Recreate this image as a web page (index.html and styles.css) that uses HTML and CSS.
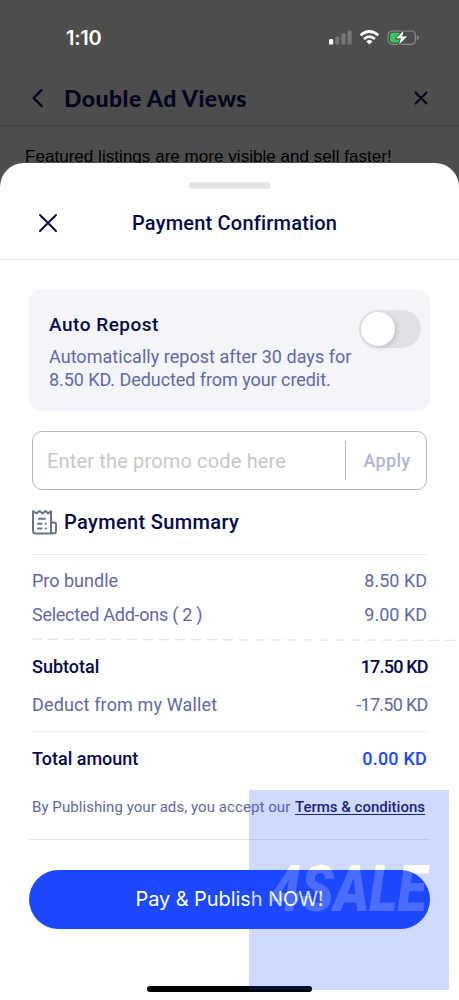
FILE: index.html
```html
<!DOCTYPE html>
<html lang="en">
<head>
<meta charset="utf-8">
<title>Payment Confirmation</title>
<link rel="stylesheet" href="styles.css">
</head>
<body>
<main class="screen">
  <div class="backdrop">
    <div class="status">
      <span class="time">1:10</span>
      <svg class="signals" width="92" height="18" viewBox="0 0 92 18">
        <rect x="0" y="9" width="4.2" height="5.6" rx="1.2" fill="#fff"/>
        <g fill="#757575"><rect x="6.2" y="6.5" width="4.2" height="8.1" rx="1.2"/><rect x="12.3" y="3.3" width="4.2" height="11.3" rx="1.2"/><rect x="18.5" y="0.5" width="4.2" height="14.1" rx="1.2"/></g>
        <g fill="none" stroke="#fff" stroke-width="2.7"><path d="M31.6 5.3Q40.4-2.3 49.2 5.3"/><path d="M34.9 9Q40.4 4.2 45.9 9"/></g>
        <path d="M37.3 11.4Q40.4 8.8 43.5 11.4L40.4 14.6Z" fill="#fff"/>
        <rect x="59" y="1" width="27.5" height="13.4" rx="4.3" fill="none" stroke="#8c8c8c" stroke-width="1.2"/>
        <path d="M88 5.5v4.4q1.8-.6 1.8-2.2T88 5.5Z" fill="#8c8c8c"/>
        <rect x="61" y="2.8" width="11" height="9.8" rx="2.5" fill="#34c759"/>
        <path d="M74.8.5 67.2 8.3h4.8l-2 6.2 8-8h-5Z" fill="#fff" stroke="#4d4d4d" stroke-width="2.2" paint-order="stroke" stroke-linejoin="round"/>
      </svg>
    </div>
    <div class="nav">
      <svg width="12" height="20" viewBox="0 0 12 20"><path d="M9.5 2 1.7 10l7.8 8" class="stroke heavy"/></svg>
      <h1 class="nav-title">Double Ad Views</h1>
      <svg width="14" height="14" viewBox="0 0 14 14"><path d="M1.5 1.5l11 11M12.5 1.5l-11 11" class="stroke"/></svg>
    </div>
    <p class="featured">Featured listings are more visible and sell faster!</p>
  </div>

  <section class="sheet">
    <div class="handle"></div>
    <header class="sheet-head">
      <svg width="20" height="20" viewBox="0 0 20 20"><path d="M2 2l16 16M18 2 2 18" class="stroke sheet-x"/></svg>
      <h2 class="sheet-title">Payment Confirmation</h2>
    </header>

    <div class="card">
      <div class="card-text">
        <h3 class="card-title">Auto Repost</h3>
        <p class="card-copy"><span class="copy-a">Automatically repost after 30 days for</span><br><span class="copy-b">8.50 KD. Deducted from your credit.</span></p>
      </div>
      <div class="toggle"><span class="knob"></span></div>
    </div>

    <div class="promo">
      <span class="placeholder">Enter the promo code here</span>
      <span class="apply">Apply</span>
    </div>

    <div class="summary">
      <div class="summary-head">
        <svg width="25" height="26" viewBox="0 0 25 26" fill="none" stroke="#66738b" stroke-width="2" stroke-linejoin="round" stroke-linecap="round">
          <path d="M1 2.2 4.5 4.4l3-2.4L10.5 4.4l3-2.4L16 4.4l3-2.2V24.5H4Q1 24.5 1 21.5Z"/>
          <path d="M19 13.5h3q2 0 2 2v6.5q0 2.5-2.5 2.5T19 22Z"/>
          <path d="M7 9.8h6M6 14.8h3.5M6 19.6h3.5M13.6 14.8h.2M13.6 19.6h.2"/>
        </svg>
        <h3 class="summary-title">Payment Summary</h3>
      </div>
      <div class="row bundle"><span class="t-bundle">Pro bundle</span><span class="amount">8.50 KD</span></div>
      <div class="row addons"><span class="t-addons">Selected Add-ons ( 2 )</span><span class="amount">9.00 KD</span></div>
      <svg class="dashes" width="427" height="4" viewBox="0 0 427 4"><path d="M0 1.2 427 2.4" stroke="#e6e6f0" stroke-width="1.3" stroke-dasharray="10 5.9"/></svg>
      <div class="row subtotal"><span class="t-subtotal">Subtotal</span><span class="amount-strong">17.50 KD</span></div>
      <div class="row wallet"><span class="t-wallet">Deduct from my Wallet</span><span class="amount-wallet">-17.50 KD</span></div>
      <div class="row total"><span class="t-total">Total amount</span><span class="amount-total">0.00 KD</span></div>
    </div>

    <p class="terms"><span class="t-terms">By Publishing your ads, you accept our</span><a class="link">Terms &amp; conditions</a></p>
    <div class="pay">Pay &amp; Publish NOW!</div>
    <div class="home"></div>
  </section>

  <div class="watermark"><span class="brand">4SALE</span></div>
</main>
</body>
</html>
```
FILE: styles.css
```css
* { box-sizing: border-box; }
body { margin: 0; background: #fff; font-family: Roboto, "Noto Sans", sans-serif; }
h1, h2, h3, p { margin: 0; }
svg { display: block; flex: none; }
span, a, h1, h2, h3, p { white-space: nowrap; }
.screen { position: relative; width: 459px; height: 1000px; overflow: hidden; background: #4d4d4d; }
.stroke { fill: none; stroke: #04051e; stroke-width: 2; stroke-linecap: round; }
.heavy { stroke-width: 2.5; stroke-linejoin: round; }
.sheet-x { stroke: #040a45; }

.backdrop { height: 163px; overflow: hidden; }
.status { height: 74px; padding: 0 38px 0 66px; display: flex; justify-content: space-between; align-items: center; }
.time { font: 600 20px/24px Inter, sans-serif; color: #fff; letter-spacing: -0.3px; padding-top: 1px; }
.signals { margin-top: 4px; }
.nav { height: 52px; padding: 0 31px 4px 32px; display: flex; align-items: center; border-bottom: 1px solid #404040; }
.nav-title { font: 900 23px/30px Lato, sans-serif; color: #04051e; margin-left: 20px; flex: 1; letter-spacing: 0.45px; }
.featured { font: 17px/20px "Liberation Sans", sans-serif; color: #000; padding: 21px 0 0 25px; letter-spacing: 0.04px; }

.sheet { height: 837px; background: #fff; border-radius: 24px 24px 0 0; padding-top: 19px; overflow: hidden; }
.handle { width: 82px; height: 7px; border-radius: 4px; background: #e5e5e5; margin: 0 auto; }
.sheet-head { height: 71px; border-bottom: 1px solid #e2e7ea; padding: 0 38px 2px; display: flex; align-items: center; }
.sheet-title { font-size: 20px; line-height: 26px; font-weight: 500; color: #040a45; margin-left: 74px; letter-spacing: 0.2px; }

.card { margin: 30px 29px 0; height: 121px; border-radius: 10px; background: #f4f5fa; padding: 22px 9px 0 20px; display: flex; justify-content: space-between; }
.card-title { font-size: 19px; line-height: 26px; font-weight: 500; color: #040a45; letter-spacing: 0.5px; }
.card-copy { margin-top: 7px; font-size: 18px; line-height: 23px; color: #6269a2; }
.copy-a { letter-spacing: 0.03px; }
.copy-b { letter-spacing: -0.06px; }
.toggle { width: 62px; height: 38px; border-radius: 19px; margin-top: -2px; padding: 2px; background: #e0e1e5; flex: none; }
.knob { display: block; width: 34px; height: 34px; border-radius: 50%; background: #fff; box-shadow: 2px 2px 5px #0002; }

.promo { margin: 20px 32px 0; height: 59px; border: 1px solid #adb6d3; border-radius: 10px; display: flex; align-items: center; justify-content: space-between; padding-left: 14px; }
.placeholder { font-size: 20px; color: #c7c7c7; letter-spacing: 0.16px; }
.apply { width: 81px; height: 39px; line-height: 39px; border-left: 1.5px solid #b4bcd9; text-align: center; font-size: 18px; font-weight: 500; color: #b0b5d5; letter-spacing: 0.3px; padding-left: 2px; }

.summary { margin: 0 32px; font-size: 18px; color: #6269a2; }
.summary-head { height: 65px; display: flex; align-items: center; gap: 7px; border-bottom: 1px solid #e8eaf0; }
.summary-title { font-size: 20px; font-weight: 500; color: #040a45; letter-spacing: 0.35px; }
.row { display: flex; justify-content: space-between; align-items: center; }
.bundle { height: 34px; margin-top: 8px; }
.addons { height: 34px; }
.t-addons { letter-spacing: -0.26px; }
.t-wallet { letter-spacing: 0.14px; }
.amount-strong { letter-spacing: -0.8px; margin-right: -0.8px; }
.amount-wallet { letter-spacing: -0.7px; margin-right: -0.7px; }
.dashes { margin: 7px 0 0; }
.subtotal { height: 34px; margin-top: 7px; color: #040a45; font-weight: 500; }
.wallet { height: 49px; padding-bottom: 6px; border-bottom: 1px solid #e8eaf0; }
.total { height: 53px; color: #040a45; font-weight: 500; }
.amount-total { color: #1c48ff; letter-spacing: 0.2px; }

.terms { margin: 0 29px; padding: 0 5px 11px 3px; height: 55px; border-bottom: 1px solid #e2e7ea; display: flex; align-items: center; justify-content: space-between; font-size: 15px; line-height: 20px; font-weight: 500; color: #6269a2; }
.t-terms { font-weight: 400; letter-spacing: 0.07px; }
.link { color: #161a58; text-decoration: underline; text-underline-offset: 2px; }
.pay { margin: 30px 29px 0; height: 59px; border-radius: 30px; background: #1c48ff; color: #fff; font: 400 20px/59px Inter, sans-serif; text-align: center; letter-spacing: -0.08px; }
.home { width: 165px; height: 6px; border-radius: 3px; background: #000; margin: 57px auto 0; }

/* Translucent brand tile floating over the bottom corner */
.watermark { position: absolute; left: 249px; top: 790px; width: 200px; height: 200px; background: #1c48ff; opacity: 0.2; display: flex; align-items: center; justify-content: center; }
.brand { color: #fff; font: italic 900 64px/64px Roboto, sans-serif; transform: scaleX(0.84); }
```
